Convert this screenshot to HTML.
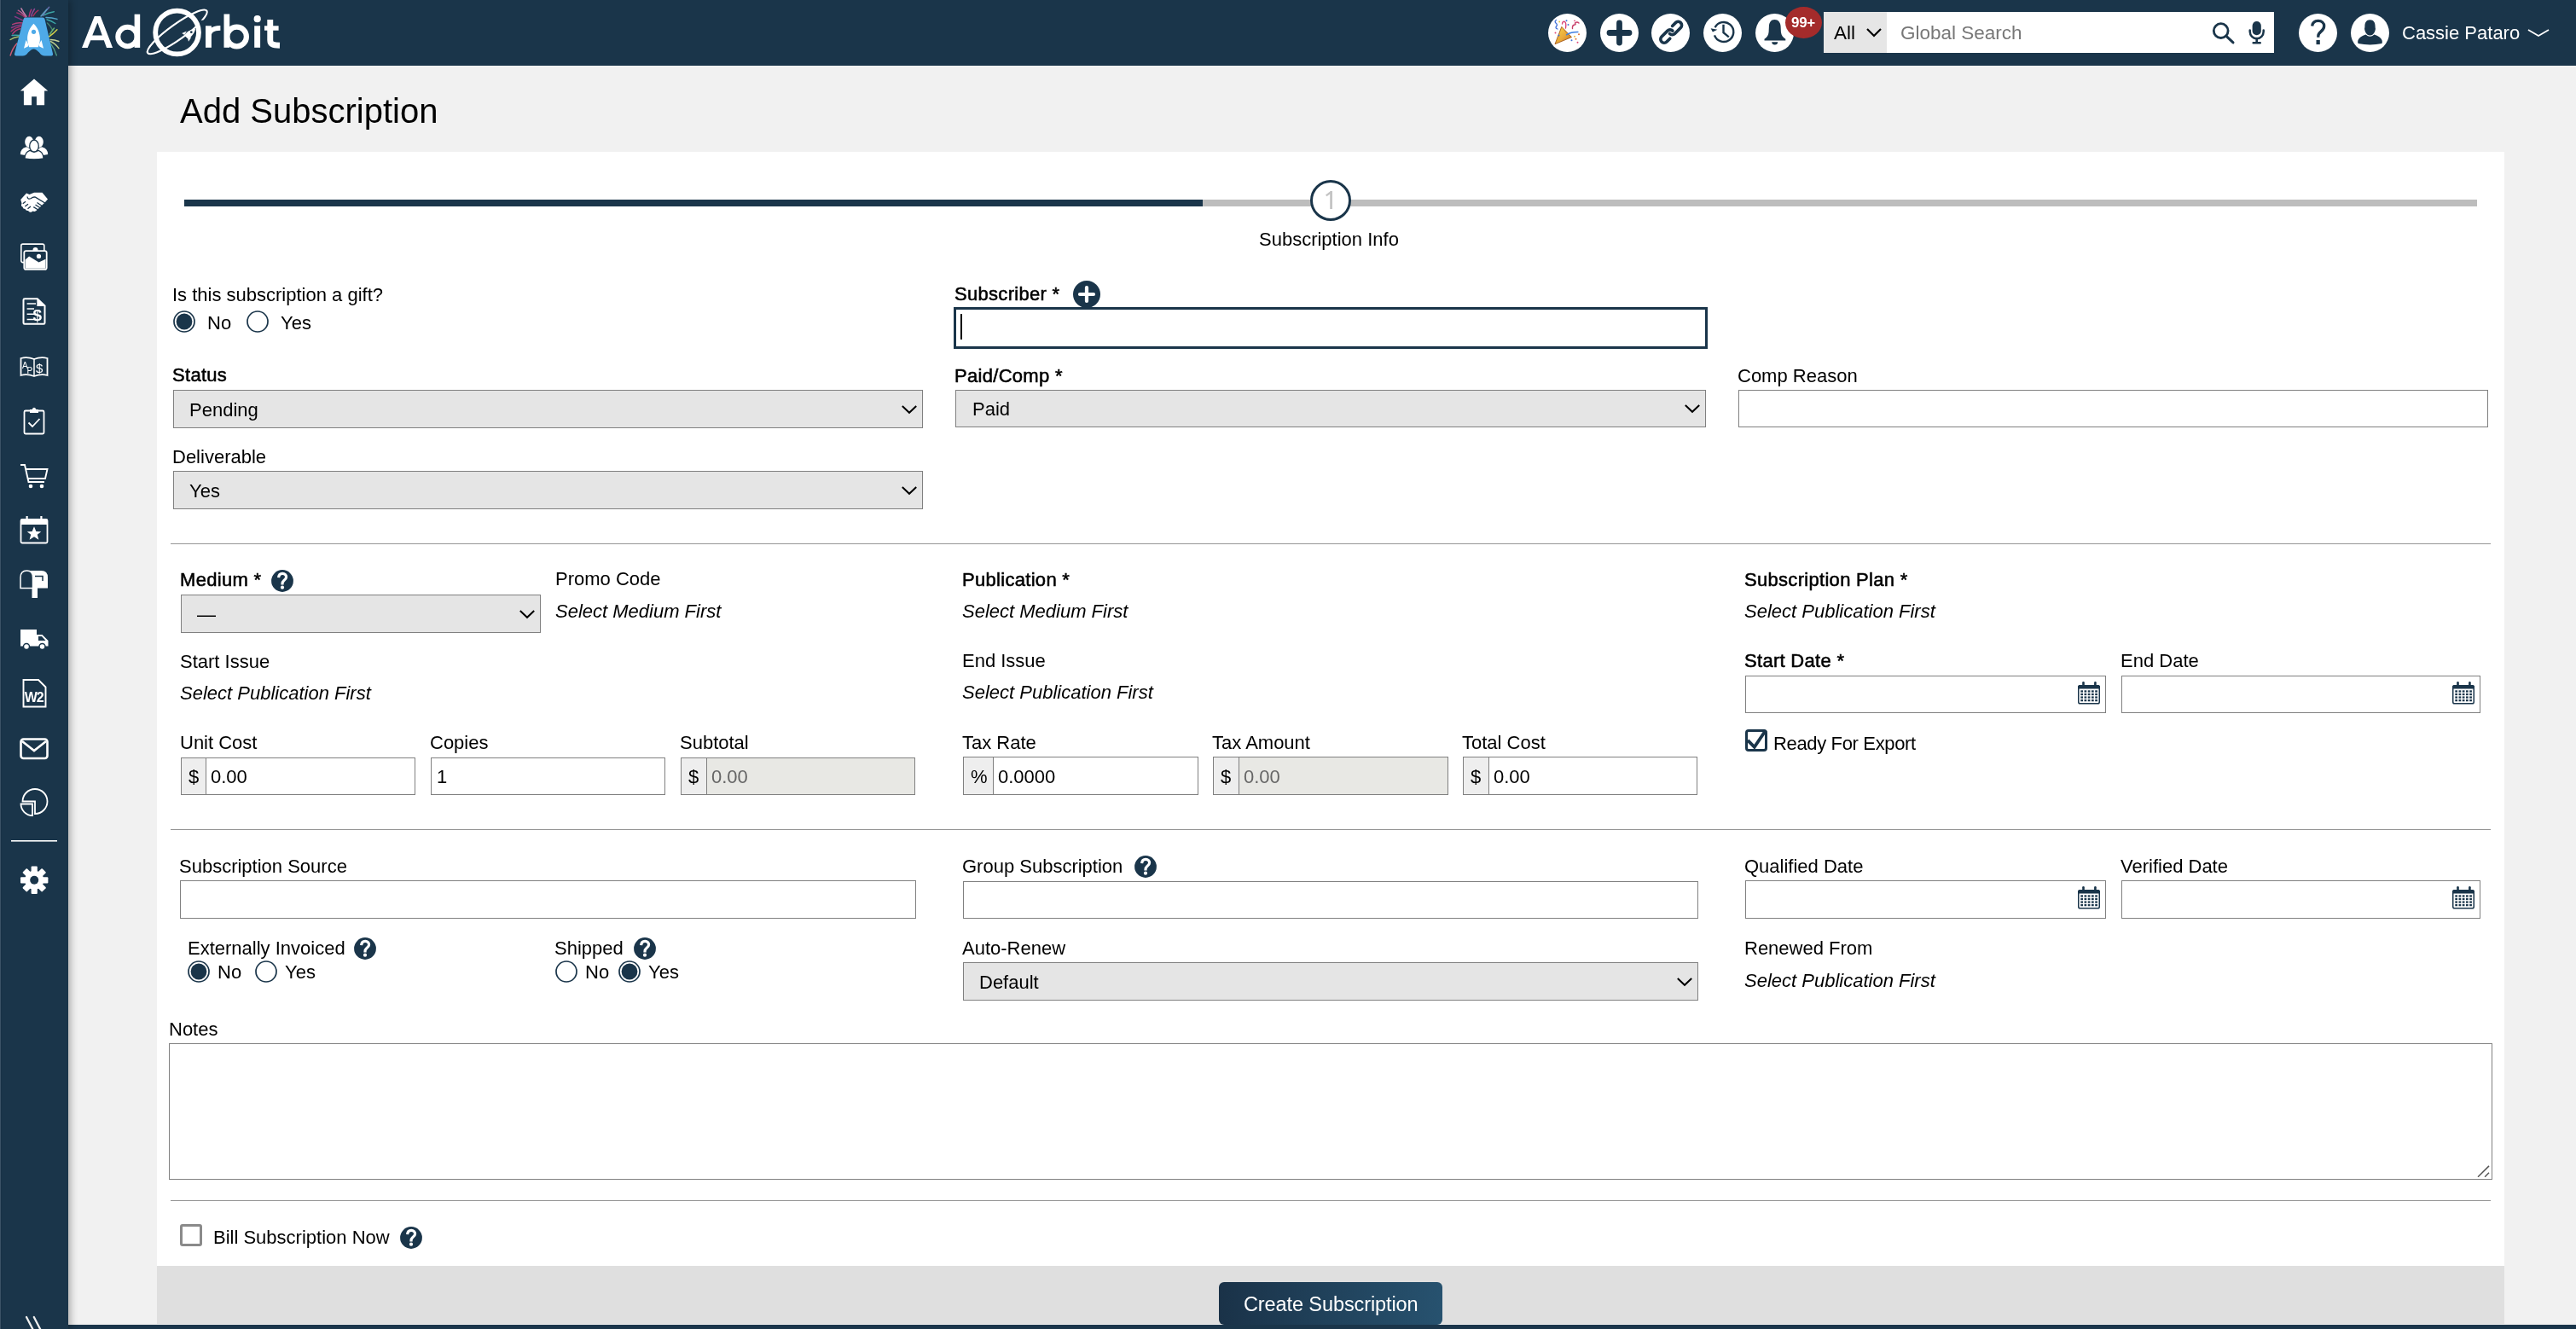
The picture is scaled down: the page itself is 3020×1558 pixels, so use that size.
<!DOCTYPE html><html><head><meta charset="utf-8"><style>
html,body{margin:0;padding:0}
body{width:3020px;height:1558px;position:relative;overflow:hidden;background:#f1f1f1;font-family:"Liberation Sans",sans-serif}
.a{position:absolute}
svg.a{will-change:transform}
.t{position:absolute;white-space:nowrap;line-height:1;will-change:transform}
.hc{border-radius:50%;background:#1a354a;color:#fff;text-align:center;font-weight:bold}
</style></head><body>
<div class="a" style="left:184px;top:178px;width:2752px;height:1374px;background:#fff"></div>
<div class="a" style="left:184px;top:1484px;width:2752px;height:68px;background:#dfdfdf"></div>
<div class="t" style="left:210.5px;top:109.64px;font-size:40px;font-weight:normal;font-style:normal;color:#000;">Add Subscription</div>
<div class="a" style="left:216px;top:234px;width:1194px;height:8px;background:#1a354a"></div>
<div class="a" style="left:1410px;top:234px;width:1494px;height:8px;background:#bdbdbd"></div>
<div class="a" style="left:1536px;top:211px;width:48px;height:48px;box-sizing:border-box;border-radius:50%;border:3px solid #1a354a;background:#fff"></div>
<svg class="a" style="left:1550px;top:220px" width="16" height="28" viewBox="0 0 16 28"><path d="M9.2 4 H12 V25 H9.2 Z M4 8.5 L10 4 L11.2 6 L5.5 10.3 Z" fill="#c4c4c4"/></svg>
<div class="t" style="left:1476px;top:270.38px;font-size:22px;font-weight:normal;font-style:normal;color:#000;">Subscription Info</div>
<div class="t" style="left:202px;top:334.88px;font-size:22px;font-weight:normal;font-style:normal;color:#000;">Is this subscription a gift?</div>
<svg class="a" style="left:201.5px;top:362.8px" width="28" height="28" viewBox="0 0 28 28"><circle cx="14" cy="14" r="12" fill="#fff" stroke="#1a354a" stroke-width="1.7"/><circle cx="14" cy="14" r="9.4" fill="#1a354a"/></svg>
<div class="t" style="left:243px;top:367.68px;font-size:22px;font-weight:normal;font-style:normal;color:#000;">No</div>
<svg class="a" style="left:288px;top:363px" width="28" height="28" viewBox="0 0 28 28"><circle cx="14" cy="14" r="12" fill="#fff" stroke="#1a354a" stroke-width="1.7"/></svg>
<div class="t" style="left:329px;top:367.68px;font-size:22px;font-weight:normal;font-style:normal;color:#000;">Yes</div>
<div class="t" style="left:1119px;top:334.08px;font-size:22px;font-weight:normal;font-style:normal;color:#000;letter-spacing:0.3px;-webkit-text-stroke:0.55px #000;">Subscriber *</div>
<svg class="a" style="left:1258px;top:329.4px" width="32" height="32" viewBox="0 0 32 32"><circle cx="16" cy="16" r="16" fill="#1a354a"/><path d="M16 8 V24 M8 16 H24" stroke="#fff" stroke-width="4.2" stroke-linecap="round"/></svg>
<div class="a" style="left:1118px;top:360px;width:884px;height:49px;background:#fff;border:3px solid #1a354a;box-sizing:border-box"></div>
<div class="a" style="left:1126px;top:368px;width:2px;height:30px;background:#000"></div>
<div class="t" style="left:202px;top:428.88px;font-size:22px;font-weight:normal;font-style:normal;color:#000;letter-spacing:0.3px;-webkit-text-stroke:0.55px #000;">Status</div>
<div class="a" style="left:203px;top:457px;width:879px;height:45px;background:#e5e5e5;border:1px solid #808080;box-sizing:border-box"></div>
<div class="t" style="left:222px;top:469.88px;font-size:22px;font-weight:normal;font-style:normal;color:#000;">Pending</div>
<svg class="a" style="left:1056px;top:472.5px" width="20" height="14" viewBox="0 0 20 14"><path d="M1.8 3 L10 10.8 L18.2 3" fill="none" stroke="#000" stroke-width="2"/></svg>
<div class="t" style="left:1119px;top:430.08px;font-size:22px;font-weight:normal;font-style:normal;color:#000;letter-spacing:0.3px;-webkit-text-stroke:0.55px #000;">Paid/Comp *</div>
<div class="a" style="left:1120px;top:457px;width:880px;height:44px;background:#e5e5e5;border:1px solid #808080;box-sizing:border-box"></div>
<div class="t" style="left:1140px;top:469.38px;font-size:22px;font-weight:normal;font-style:normal;color:#000;">Paid</div>
<svg class="a" style="left:1974px;top:472.0px" width="20" height="14" viewBox="0 0 20 14"><path d="M1.8 3 L10 10.8 L18.2 3" fill="none" stroke="#000" stroke-width="2"/></svg>
<div class="t" style="left:2037px;top:429.68px;font-size:22px;font-weight:normal;font-style:normal;color:#000;">Comp Reason</div>
<div class="a" style="left:2038px;top:457px;width:879px;height:44px;background:#fff;border:1px solid #808080;box-sizing:border-box"></div>
<div class="t" style="left:202px;top:524.98px;font-size:22px;font-weight:normal;font-style:normal;color:#000;">Deliverable</div>
<div class="a" style="left:203px;top:552px;width:879px;height:45px;background:#e5e5e5;border:1px solid #808080;box-sizing:border-box"></div>
<div class="t" style="left:222px;top:564.88px;font-size:22px;font-weight:normal;font-style:normal;color:#000;">Yes</div>
<svg class="a" style="left:1056px;top:567.5px" width="20" height="14" viewBox="0 0 20 14"><path d="M1.8 3 L10 10.8 L18.2 3" fill="none" stroke="#000" stroke-width="2"/></svg>
<div class="a" style="left:200px;top:637px;width:2720px;height:1px;background:#959595"></div>
<div class="t" style="left:211px;top:668.58px;font-size:22px;font-weight:normal;font-style:normal;color:#000;letter-spacing:0.3px;-webkit-text-stroke:0.55px #000;">Medium *</div>
<svg class="a" style="left:317.8px;top:667.5px" width="26" height="26" viewBox="0 0 26 26"><circle cx="13" cy="13" r="12.9" fill="#1a354a"/><path d="M8.6 9.2 C8.9 5.6 10.9 4.3 13.2 4.3 C16 4.3 17.6 6.3 17.6 8.4 C17.6 10.6 16 11.7 14.7 12.7 C13.5 13.7 13 14.6 13 16.4 L13 17.4" fill="none" stroke="#fff" stroke-width="3.2"/><circle cx="13" cy="20.7" r="2.1" fill="#fff"/></svg>
<div class="a" style="left:212px;top:697px;width:422px;height:45px;background:#e5e5e5;border:1px solid #808080;box-sizing:border-box"></div>
<div class="t" style="left:231px;top:709.88px;font-size:22px;font-weight:normal;font-style:normal;color:#000;">&mdash;</div>
<svg class="a" style="left:608px;top:712.5px" width="20" height="14" viewBox="0 0 20 14"><path d="M1.8 3 L10 10.8 L18.2 3" fill="none" stroke="#000" stroke-width="2"/></svg>
<div class="t" style="left:651px;top:668.38px;font-size:22px;font-weight:normal;font-style:normal;color:#000;">Promo Code</div>
<div class="t" style="left:651px;top:706.08px;font-size:22px;font-weight:normal;font-style:italic;color:#000;">Select Medium First</div>
<div class="t" style="left:211px;top:765.08px;font-size:22px;font-weight:normal;font-style:normal;color:#000;">Start Issue</div>
<div class="t" style="left:211px;top:802.08px;font-size:22px;font-weight:normal;font-style:italic;color:#000;">Select Publication First</div>
<div class="t" style="left:211px;top:859.68px;font-size:22px;font-weight:normal;font-style:normal;color:#000;">Unit Cost</div>
<div class="a" style="left:212px;top:888px;width:275px;height:44px;background:#fff;border:1px solid #808080;box-sizing:border-box"></div>
<div class="a" style="left:212px;top:888px;width:30px;height:44px;background:#eeeeee;border:1px solid #808080;box-sizing:border-box"></div>
<div class="t" style="left:221px;top:900.38px;font-size:22px;font-weight:normal;font-style:normal;color:#000;">$</div>
<div class="t" style="left:247px;top:900.38px;font-size:22px;font-weight:normal;font-style:normal;color:#000;">0.00</div>
<div class="t" style="left:504px;top:859.68px;font-size:22px;font-weight:normal;font-style:normal;color:#000;">Copies</div>
<div class="a" style="left:505px;top:888px;width:275px;height:44px;background:#fff;border:1px solid #808080;box-sizing:border-box"></div>
<div class="t" style="left:512px;top:900.38px;font-size:22px;font-weight:normal;font-style:normal;color:#000;">1</div>
<div class="t" style="left:797px;top:859.68px;font-size:22px;font-weight:normal;font-style:normal;color:#000;">Subtotal</div>
<div class="a" style="left:798px;top:888px;width:275px;height:44px;background:#e8e8e4;border:1px solid #808080;box-sizing:border-box"></div>
<div class="a" style="left:798px;top:888px;width:31px;height:44px;background:#eeeeee;border:1px solid #808080;box-sizing:border-box"></div>
<div class="t" style="left:807px;top:900.38px;font-size:22px;font-weight:normal;font-style:normal;color:#000;">$</div>
<div class="t" style="left:834px;top:900.38px;font-size:22px;font-weight:normal;font-style:normal;color:#666;">0.00</div>
<div class="t" style="left:1128px;top:669.08px;font-size:22px;font-weight:normal;font-style:normal;color:#000;letter-spacing:0.3px;-webkit-text-stroke:0.55px #000;">Publication *</div>
<div class="t" style="left:1128px;top:706.18px;font-size:22px;font-weight:normal;font-style:italic;color:#000;">Select Medium First</div>
<div class="t" style="left:1128px;top:763.78px;font-size:22px;font-weight:normal;font-style:normal;color:#000;">End Issue</div>
<div class="t" style="left:1128px;top:801.38px;font-size:22px;font-weight:normal;font-style:italic;color:#000;">Select Publication First</div>
<div class="t" style="left:1128px;top:859.78px;font-size:22px;font-weight:normal;font-style:normal;color:#000;">Tax Rate</div>
<div class="a" style="left:1129px;top:887px;width:276px;height:45px;background:#fff;border:1px solid #808080;box-sizing:border-box"></div>
<div class="a" style="left:1129px;top:887px;width:36px;height:45px;background:#eeeeee;border:1px solid #808080;box-sizing:border-box"></div>
<div class="t" style="left:1138px;top:899.88px;font-size:22px;font-weight:normal;font-style:normal;color:#000;">%</div>
<div class="t" style="left:1170px;top:899.88px;font-size:22px;font-weight:normal;font-style:normal;color:#000;">0.0000</div>
<div class="t" style="left:1421px;top:859.78px;font-size:22px;font-weight:normal;font-style:normal;color:#000;">Tax Amount</div>
<div class="a" style="left:1422px;top:887px;width:276px;height:45px;background:#e8e8e4;border:1px solid #808080;box-sizing:border-box"></div>
<div class="a" style="left:1422px;top:887px;width:31px;height:45px;background:#eeeeee;border:1px solid #808080;box-sizing:border-box"></div>
<div class="t" style="left:1431px;top:899.88px;font-size:22px;font-weight:normal;font-style:normal;color:#000;">$</div>
<div class="t" style="left:1458px;top:899.88px;font-size:22px;font-weight:normal;font-style:normal;color:#666;">0.00</div>
<div class="t" style="left:1714px;top:859.78px;font-size:22px;font-weight:normal;font-style:normal;color:#000;">Total Cost</div>
<div class="a" style="left:1715px;top:887px;width:275px;height:45px;background:#fff;border:1px solid #808080;box-sizing:border-box"></div>
<div class="a" style="left:1715px;top:887px;width:31px;height:45px;background:#eeeeee;border:1px solid #808080;box-sizing:border-box"></div>
<div class="t" style="left:1724px;top:899.88px;font-size:22px;font-weight:normal;font-style:normal;color:#000;">$</div>
<div class="t" style="left:1751px;top:899.88px;font-size:22px;font-weight:normal;font-style:normal;color:#000;">0.00</div>
<div class="t" style="left:2045px;top:668.78px;font-size:22px;font-weight:normal;font-style:normal;color:#000;letter-spacing:0.3px;-webkit-text-stroke:0.55px #000;">Subscription Plan *</div>
<div class="t" style="left:2045px;top:706.38px;font-size:22px;font-weight:normal;font-style:italic;color:#000;">Select Publication First</div>
<div class="t" style="left:2045px;top:763.68px;font-size:22px;font-weight:normal;font-style:normal;color:#000;letter-spacing:0.3px;-webkit-text-stroke:0.55px #000;">Start Date *</div>
<div class="a" style="left:2046px;top:792px;width:423px;height:44px;background:#fff;border:1px solid #808080;box-sizing:border-box"></div>
<svg class="a" style="left:2436px;top:799px" width="26" height="27" viewBox="0 0 26 27"><rect x="0.75" y="4.75" width="24.5" height="21" rx="1.8" fill="#fff" stroke="#1a354a" stroke-width="1.5"/><path d="M0 6.5 Q0 4 2.5 4 H23.5 Q26 4 26 6.5 V8.6 H0 Z" fill="#1a354a"/><rect x="5.2" y="0" width="2.6" height="6" rx="1.3" fill="#1a354a"/><rect x="19.1" y="0" width="2.6" height="6" rx="1.3" fill="#1a354a"/><rect x="3.30" y="10.30" width="2.7" height="2.3" fill="#1a354a"/><rect x="7.53" y="10.30" width="2.7" height="2.3" fill="#1a354a"/><rect x="11.76" y="10.30" width="2.7" height="2.3" fill="#1a354a"/><rect x="15.99" y="10.30" width="2.7" height="2.3" fill="#1a354a"/><rect x="20.22" y="10.30" width="2.7" height="2.3" fill="#1a354a"/><rect x="3.30" y="13.85" width="2.7" height="2.3" fill="#1a354a"/><rect x="7.53" y="13.85" width="2.7" height="2.3" fill="#1a354a"/><rect x="11.76" y="13.85" width="2.7" height="2.3" fill="#1a354a"/><rect x="15.99" y="13.85" width="2.7" height="2.3" fill="#1a354a"/><rect x="20.22" y="13.85" width="2.7" height="2.3" fill="#1a354a"/><rect x="3.30" y="17.40" width="2.7" height="2.3" fill="#1a354a"/><rect x="7.53" y="17.40" width="2.7" height="2.3" fill="#1a354a"/><rect x="11.76" y="17.40" width="2.7" height="2.3" fill="#1a354a"/><rect x="15.99" y="17.40" width="2.7" height="2.3" fill="#1a354a"/><rect x="20.22" y="17.40" width="2.7" height="2.3" fill="#1a354a"/><rect x="3.30" y="20.95" width="2.7" height="2.3" fill="#1a354a"/><rect x="7.53" y="20.95" width="2.7" height="2.3" fill="#1a354a"/><rect x="11.76" y="20.95" width="2.7" height="2.3" fill="#1a354a"/><rect x="15.99" y="20.95" width="2.7" height="2.3" fill="#1a354a"/><rect x="20.22" y="20.95" width="2.7" height="2.3" fill="#1a354a"/></svg>
<div class="t" style="left:2486px;top:763.68px;font-size:22px;font-weight:normal;font-style:normal;color:#000;">End Date</div>
<div class="a" style="left:2487px;top:792px;width:421px;height:44px;background:#fff;border:1px solid #808080;box-sizing:border-box"></div>
<svg class="a" style="left:2875px;top:799px" width="26" height="27" viewBox="0 0 26 27"><rect x="0.75" y="4.75" width="24.5" height="21" rx="1.8" fill="#fff" stroke="#1a354a" stroke-width="1.5"/><path d="M0 6.5 Q0 4 2.5 4 H23.5 Q26 4 26 6.5 V8.6 H0 Z" fill="#1a354a"/><rect x="5.2" y="0" width="2.6" height="6" rx="1.3" fill="#1a354a"/><rect x="19.1" y="0" width="2.6" height="6" rx="1.3" fill="#1a354a"/><rect x="3.30" y="10.30" width="2.7" height="2.3" fill="#1a354a"/><rect x="7.53" y="10.30" width="2.7" height="2.3" fill="#1a354a"/><rect x="11.76" y="10.30" width="2.7" height="2.3" fill="#1a354a"/><rect x="15.99" y="10.30" width="2.7" height="2.3" fill="#1a354a"/><rect x="20.22" y="10.30" width="2.7" height="2.3" fill="#1a354a"/><rect x="3.30" y="13.85" width="2.7" height="2.3" fill="#1a354a"/><rect x="7.53" y="13.85" width="2.7" height="2.3" fill="#1a354a"/><rect x="11.76" y="13.85" width="2.7" height="2.3" fill="#1a354a"/><rect x="15.99" y="13.85" width="2.7" height="2.3" fill="#1a354a"/><rect x="20.22" y="13.85" width="2.7" height="2.3" fill="#1a354a"/><rect x="3.30" y="17.40" width="2.7" height="2.3" fill="#1a354a"/><rect x="7.53" y="17.40" width="2.7" height="2.3" fill="#1a354a"/><rect x="11.76" y="17.40" width="2.7" height="2.3" fill="#1a354a"/><rect x="15.99" y="17.40" width="2.7" height="2.3" fill="#1a354a"/><rect x="20.22" y="17.40" width="2.7" height="2.3" fill="#1a354a"/><rect x="3.30" y="20.95" width="2.7" height="2.3" fill="#1a354a"/><rect x="7.53" y="20.95" width="2.7" height="2.3" fill="#1a354a"/><rect x="11.76" y="20.95" width="2.7" height="2.3" fill="#1a354a"/><rect x="15.99" y="20.95" width="2.7" height="2.3" fill="#1a354a"/><rect x="20.22" y="20.95" width="2.7" height="2.3" fill="#1a354a"/></svg>
<svg class="a" style="left:2045px;top:853px" width="30" height="30" viewBox="0 0 30 30"><rect x="2.5" y="3.5" width="23" height="23" rx="2.5" fill="#fff" stroke="#1a354a" stroke-width="3"/><path d="M4 14.8 L11.8 22.8 L25 3.2" fill="none" stroke="#1a354a" stroke-width="3.8"/></svg>
<div class="t" style="left:2079px;top:861.38px;font-size:22px;font-weight:normal;font-style:normal;color:#000;letter-spacing:-0.35px;">Ready For Export</div>
<div class="a" style="left:200px;top:972px;width:2720px;height:1px;background:#959595"></div>
<div class="t" style="left:210px;top:1004.88px;font-size:22px;font-weight:normal;font-style:normal;color:#000;">Subscription Source</div>
<div class="a" style="left:211px;top:1032px;width:863px;height:45px;background:#fff;border:1px solid #808080;box-sizing:border-box"></div>
<div class="t" style="left:1128px;top:1004.98px;font-size:22px;font-weight:normal;font-style:normal;color:#000;">Group Subscription</div>
<svg class="a" style="left:1329.8px;top:1002.7px" width="26" height="26" viewBox="0 0 26 26"><circle cx="13" cy="13" r="12.9" fill="#1a354a"/><path d="M8.6 9.2 C8.9 5.6 10.9 4.3 13.2 4.3 C16 4.3 17.6 6.3 17.6 8.4 C17.6 10.6 16 11.7 14.7 12.7 C13.5 13.7 13 14.6 13 16.4 L13 17.4" fill="none" stroke="#fff" stroke-width="3.2"/><circle cx="13" cy="20.7" r="2.1" fill="#fff"/></svg>
<div class="a" style="left:1129px;top:1033px;width:862px;height:44px;background:#fff;border:1px solid #808080;box-sizing:border-box"></div>
<div class="t" style="left:2045px;top:1005.38px;font-size:22px;font-weight:normal;font-style:normal;color:#000;">Qualified Date</div>
<div class="a" style="left:2046px;top:1032px;width:423px;height:45px;background:#fff;border:1px solid #808080;box-sizing:border-box"></div>
<svg class="a" style="left:2436px;top:1039px" width="26" height="27" viewBox="0 0 26 27"><rect x="0.75" y="4.75" width="24.5" height="21" rx="1.8" fill="#fff" stroke="#1a354a" stroke-width="1.5"/><path d="M0 6.5 Q0 4 2.5 4 H23.5 Q26 4 26 6.5 V8.6 H0 Z" fill="#1a354a"/><rect x="5.2" y="0" width="2.6" height="6" rx="1.3" fill="#1a354a"/><rect x="19.1" y="0" width="2.6" height="6" rx="1.3" fill="#1a354a"/><rect x="3.30" y="10.30" width="2.7" height="2.3" fill="#1a354a"/><rect x="7.53" y="10.30" width="2.7" height="2.3" fill="#1a354a"/><rect x="11.76" y="10.30" width="2.7" height="2.3" fill="#1a354a"/><rect x="15.99" y="10.30" width="2.7" height="2.3" fill="#1a354a"/><rect x="20.22" y="10.30" width="2.7" height="2.3" fill="#1a354a"/><rect x="3.30" y="13.85" width="2.7" height="2.3" fill="#1a354a"/><rect x="7.53" y="13.85" width="2.7" height="2.3" fill="#1a354a"/><rect x="11.76" y="13.85" width="2.7" height="2.3" fill="#1a354a"/><rect x="15.99" y="13.85" width="2.7" height="2.3" fill="#1a354a"/><rect x="20.22" y="13.85" width="2.7" height="2.3" fill="#1a354a"/><rect x="3.30" y="17.40" width="2.7" height="2.3" fill="#1a354a"/><rect x="7.53" y="17.40" width="2.7" height="2.3" fill="#1a354a"/><rect x="11.76" y="17.40" width="2.7" height="2.3" fill="#1a354a"/><rect x="15.99" y="17.40" width="2.7" height="2.3" fill="#1a354a"/><rect x="20.22" y="17.40" width="2.7" height="2.3" fill="#1a354a"/><rect x="3.30" y="20.95" width="2.7" height="2.3" fill="#1a354a"/><rect x="7.53" y="20.95" width="2.7" height="2.3" fill="#1a354a"/><rect x="11.76" y="20.95" width="2.7" height="2.3" fill="#1a354a"/><rect x="15.99" y="20.95" width="2.7" height="2.3" fill="#1a354a"/><rect x="20.22" y="20.95" width="2.7" height="2.3" fill="#1a354a"/></svg>
<div class="t" style="left:2486px;top:1005.38px;font-size:22px;font-weight:normal;font-style:normal;color:#000;">Verified Date</div>
<div class="a" style="left:2487px;top:1032px;width:421px;height:45px;background:#fff;border:1px solid #808080;box-sizing:border-box"></div>
<svg class="a" style="left:2875px;top:1039px" width="26" height="27" viewBox="0 0 26 27"><rect x="0.75" y="4.75" width="24.5" height="21" rx="1.8" fill="#fff" stroke="#1a354a" stroke-width="1.5"/><path d="M0 6.5 Q0 4 2.5 4 H23.5 Q26 4 26 6.5 V8.6 H0 Z" fill="#1a354a"/><rect x="5.2" y="0" width="2.6" height="6" rx="1.3" fill="#1a354a"/><rect x="19.1" y="0" width="2.6" height="6" rx="1.3" fill="#1a354a"/><rect x="3.30" y="10.30" width="2.7" height="2.3" fill="#1a354a"/><rect x="7.53" y="10.30" width="2.7" height="2.3" fill="#1a354a"/><rect x="11.76" y="10.30" width="2.7" height="2.3" fill="#1a354a"/><rect x="15.99" y="10.30" width="2.7" height="2.3" fill="#1a354a"/><rect x="20.22" y="10.30" width="2.7" height="2.3" fill="#1a354a"/><rect x="3.30" y="13.85" width="2.7" height="2.3" fill="#1a354a"/><rect x="7.53" y="13.85" width="2.7" height="2.3" fill="#1a354a"/><rect x="11.76" y="13.85" width="2.7" height="2.3" fill="#1a354a"/><rect x="15.99" y="13.85" width="2.7" height="2.3" fill="#1a354a"/><rect x="20.22" y="13.85" width="2.7" height="2.3" fill="#1a354a"/><rect x="3.30" y="17.40" width="2.7" height="2.3" fill="#1a354a"/><rect x="7.53" y="17.40" width="2.7" height="2.3" fill="#1a354a"/><rect x="11.76" y="17.40" width="2.7" height="2.3" fill="#1a354a"/><rect x="15.99" y="17.40" width="2.7" height="2.3" fill="#1a354a"/><rect x="20.22" y="17.40" width="2.7" height="2.3" fill="#1a354a"/><rect x="3.30" y="20.95" width="2.7" height="2.3" fill="#1a354a"/><rect x="7.53" y="20.95" width="2.7" height="2.3" fill="#1a354a"/><rect x="11.76" y="20.95" width="2.7" height="2.3" fill="#1a354a"/><rect x="15.99" y="20.95" width="2.7" height="2.3" fill="#1a354a"/><rect x="20.22" y="20.95" width="2.7" height="2.3" fill="#1a354a"/></svg>
<div class="t" style="left:220px;top:1100.88px;font-size:22px;font-weight:normal;font-style:normal;color:#000;">Externally Invoiced</div>
<svg class="a" style="left:415.0px;top:1098.8px" width="26" height="26" viewBox="0 0 26 26"><circle cx="13" cy="13" r="12.9" fill="#1a354a"/><path d="M8.6 9.2 C8.9 5.6 10.9 4.3 13.2 4.3 C16 4.3 17.6 6.3 17.6 8.4 C17.6 10.6 16 11.7 14.7 12.7 C13.5 13.7 13 14.6 13 16.4 L13 17.4" fill="none" stroke="#fff" stroke-width="3.2"/><circle cx="13" cy="20.7" r="2.1" fill="#fff"/></svg>
<svg class="a" style="left:218.7px;top:1125px" width="28" height="28" viewBox="0 0 28 28"><circle cx="14" cy="14" r="12" fill="#fff" stroke="#1a354a" stroke-width="1.7"/><circle cx="14" cy="14" r="9.4" fill="#1a354a"/></svg>
<div class="t" style="left:255px;top:1129.38px;font-size:22px;font-weight:normal;font-style:normal;color:#000;">No</div>
<svg class="a" style="left:298.3px;top:1125px" width="28" height="28" viewBox="0 0 28 28"><circle cx="14" cy="14" r="12" fill="#fff" stroke="#1a354a" stroke-width="1.7"/></svg>
<div class="t" style="left:334px;top:1129.38px;font-size:22px;font-weight:normal;font-style:normal;color:#000;">Yes</div>
<div class="t" style="left:650px;top:1100.88px;font-size:22px;font-weight:normal;font-style:normal;color:#000;">Shipped</div>
<svg class="a" style="left:743.4px;top:1098.8px" width="26" height="26" viewBox="0 0 26 26"><circle cx="13" cy="13" r="12.9" fill="#1a354a"/><path d="M8.6 9.2 C8.9 5.6 10.9 4.3 13.2 4.3 C16 4.3 17.6 6.3 17.6 8.4 C17.6 10.6 16 11.7 14.7 12.7 C13.5 13.7 13 14.6 13 16.4 L13 17.4" fill="none" stroke="#fff" stroke-width="3.2"/><circle cx="13" cy="20.7" r="2.1" fill="#fff"/></svg>
<svg class="a" style="left:649.7px;top:1125px" width="28" height="28" viewBox="0 0 28 28"><circle cx="14" cy="14" r="12" fill="#fff" stroke="#1a354a" stroke-width="1.7"/></svg>
<div class="t" style="left:686px;top:1129.38px;font-size:22px;font-weight:normal;font-style:normal;color:#000;">No</div>
<svg class="a" style="left:723.8px;top:1125px" width="28" height="28" viewBox="0 0 28 28"><circle cx="14" cy="14" r="12" fill="#fff" stroke="#1a354a" stroke-width="1.7"/><circle cx="14" cy="14" r="9.4" fill="#1a354a"/></svg>
<div class="t" style="left:760px;top:1129.38px;font-size:22px;font-weight:normal;font-style:normal;color:#000;">Yes</div>
<div class="t" style="left:1128px;top:1100.98px;font-size:22px;font-weight:normal;font-style:normal;color:#000;">Auto-Renew</div>
<div class="a" style="left:1129px;top:1128px;width:862px;height:45px;background:#e5e5e5;border:1px solid #808080;box-sizing:border-box"></div>
<div class="t" style="left:1148px;top:1140.88px;font-size:22px;font-weight:normal;font-style:normal;color:#000;">Default</div>
<svg class="a" style="left:1965px;top:1143.5px" width="20" height="14" viewBox="0 0 20 14"><path d="M1.8 3 L10 10.8 L18.2 3" fill="none" stroke="#000" stroke-width="2"/></svg>
<div class="t" style="left:2045px;top:1100.98px;font-size:22px;font-weight:normal;font-style:normal;color:#000;">Renewed From</div>
<div class="t" style="left:2045px;top:1138.58px;font-size:22px;font-weight:normal;font-style:italic;color:#000;">Select Publication First</div>
<div class="t" style="left:198px;top:1195.78px;font-size:22px;font-weight:normal;font-style:normal;color:#000;">Notes</div>
<div class="a" style="left:198px;top:1223px;width:2724px;height:160px;background:#fff;border:1px solid #808080;box-sizing:border-box"></div>
<svg class="a" style="left:2904px;top:1364px" width="16" height="16" viewBox="0 0 16 16"><path d="M1 15.7 L14 2.9 M9.1 15.7 L14 10.8" stroke="#555" stroke-width="1.5"/></svg>
<div class="a" style="left:200px;top:1407px;width:2720px;height:1px;background:#959595"></div>
<div class="a" style="left:211px;top:1435px;width:26px;height:26px;border:3px solid #8a8a8a;border-radius:3px;box-sizing:border-box;background:#fff"></div>
<div class="t" style="left:250px;top:1439.88px;font-size:22px;font-weight:normal;font-style:normal;color:#000;">Bill Subscription Now</div>
<svg class="a" style="left:468.5px;top:1437.6px" width="26" height="26" viewBox="0 0 26 26"><circle cx="13" cy="13" r="12.9" fill="#1a354a"/><path d="M8.6 9.2 C8.9 5.6 10.9 4.3 13.2 4.3 C16 4.3 17.6 6.3 17.6 8.4 C17.6 10.6 16 11.7 14.7 12.7 C13.5 13.7 13 14.6 13 16.4 L13 17.4" fill="none" stroke="#fff" stroke-width="3.2"/><circle cx="13" cy="20.7" r="2.1" fill="#fff"/></svg>
<div class="a" style="left:1429px;top:1503px;width:262px;height:49.5px;border-radius:6px;background:linear-gradient(90deg,#1a3248,#27526f)"></div>
<div class="t" style="left:1457.5px;top:1517.61px;font-size:23.5px;font-weight:normal;font-style:normal;color:#fff;letter-spacing:-0.1px;">Create Subscription</div>
<div class="a" style="left:0px;top:1553px;width:3020px;height:5px;background:#1a354a"></div>
<div class="a" style="left:0px;top:0px;width:3020px;height:77px;background:#1a354a"></div>
<div class="a" style="left:0;top:0;width:80px;height:1558px;background:#1a354a;box-shadow:3px 0 8px rgba(0,0,0,0.28)"></div>
<div class="a" style="left:1815.0px;top:15.8px;width:45px;height:45px;border-radius:50%;background:#fff"></div>
<div class="a" style="left:1875.5px;top:15.8px;width:45px;height:45px;border-radius:50%;background:#fff"></div>
<div class="a" style="left:1935.9px;top:15.8px;width:45px;height:45px;border-radius:50%;background:#fff"></div>
<div class="a" style="left:1997.0px;top:15.8px;width:45px;height:45px;border-radius:50%;background:#fff"></div>
<div class="a" style="left:2057.5px;top:15.8px;width:45px;height:45px;border-radius:50%;background:#fff"></div>
<div class="a" style="left:2695.0px;top:15.8px;width:45px;height:45px;border-radius:50%;background:#fff"></div>
<div class="a" style="left:2755.5px;top:15.8px;width:45px;height:45px;border-radius:50%;background:#fff"></div>
<div class="a" style="left:0px;top:0px;width:1px;height:1558px;background:#3b5266"></div>
<div class="a" style="left:1px;top:0px;width:1px;height:1558px;background:#183247"></div>
<svg class="a" style="left:0px;top:0px;overflow:visible" width="80" height="1558" viewBox="0 0 80 1558">
<path fill="#fff" d="M40 92.6 L56.2 106.5 L52.1 106.5 L52.1 123.3 L42.9 123.3 L42.9 113.2 L37.1 113.2 L37.1 123.3 L27.9 123.3 L27.9 106.5 L23.8 106.5 Z"/>
<g fill="#fff">
<ellipse cx="34.2" cy="166.3" rx="5" ry="6.6"/><ellipse cx="45.8" cy="166.3" rx="5" ry="6.6"/>
<path d="M23.8 181 Q24 174 31 172.3 L36.5 175 L36.5 181.8 Q29 182.2 23.8 181 Z"/><path d="M56.2 181 Q56 174 49 172.3 L43.5 175 L43.5 181.8 Q51 182.2 56.2 181 Z"/>
</g>
<g fill="#fff" stroke="#1a354a" stroke-width="1.3">
<ellipse cx="40" cy="171.2" rx="5.3" ry="7"/>
<path d="M29 185.8 Q29.2 178.2 35 176.3 Q40 180.3 45 176.3 Q50.8 178.2 51 185.8 Q40 187.8 29 185.8 Z"/>
</g>
<path fill="#fff" d="M24.2 234 L31 226.5 L34.5 228 L40 225.8 L49.5 225.8 L56 233.5 L53 237 L44 245.5 Q41.5 249 38.5 247.5 L37 248.5 Q34.5 249.5 33 247 Q30.5 247.5 29.5 245 Q27 245 26.5 242.5 Q24 241.5 25.5 238.5 Z"/>
<path d="M32 230.5 Q32.5 234.5 36.5 232.5 Q39 230.5 41.5 231.2 L53.5 238.5 M26.8 238.8 L30 236.2 M29.3 242 L33 239.2 M32.5 244.8 L36 242 M43.5 237.5 L50 242 M41.5 240 L47.5 244 M39.3 242.6 L44.8 246" fill="none" stroke="#1a354a" stroke-width="1.3"/>
<rect x="24.8" y="286.1" width="27" height="21.5" rx="2" fill="none" stroke="#fff" stroke-width="1.6"/>
<circle cx="41.5" cy="293" r="3" fill="#fff"/>
<rect x="28.3" y="294.2" width="26.4" height="21.7" rx="2.2" fill="#1a354a" stroke="#fff" stroke-width="1.8"/>
<path fill="#fff" d="M29.6 304.6 L34.1 300.4 L45.5 307.6 L53.5 303.8 L53.5 314.8 L29.6 314.8 Z"/>
<circle cx="45.5" cy="300.4" r="2.6" fill="#fff"/>
<path d="M29 350.3 H43.8 L52.5 358.5 V378.5 Q52.5 379.8 51.2 379.8 H28.8 Q27.5 379.8 27.5 378.5 V351.6 Q27.5 350.3 29 350.3 Z" fill="none" stroke="#fff" stroke-width="2"/>
<path d="M43.3 349.5 L53.3 358.9 L43.3 358.9 Z" fill="#fff"/>
<path d="M31.6 356 H42 M31.6 362 H40 M31.6 368.2 H40 M31.6 374.5 H41" stroke="#fff" stroke-width="1.6"/>
<text x="38.6" y="375.5" font-family="Liberation Sans" font-size="19" font-weight="bold" fill="#fff">$</text>
<path d="M24.5 420 Q32 418 40 421 Q48 418 55.5 420 V440 Q48 438 40 441 Q32 438 24.5 440 Z" fill="none" stroke="#fff" stroke-width="1.8"/>
<path d="M40 421 V441" stroke="#fff" stroke-width="1.5"/>
<text x="26" y="432" font-family="Liberation Sans" font-size="10" fill="#fff">A</text><text x="31.5" y="438" font-family="Liberation Sans" font-size="10" fill="#fff">P</text>
<text x="42" y="437" font-family="Liberation Sans" font-size="15" fill="#fff">$</text>
<rect x="28.5" y="481.5" width="23" height="27" rx="1.5" fill="none" stroke="#fff" stroke-width="1.8"/>
<path d="M35 484 V480 H37.5 Q40 475.5 42.5 480 H45 V484 Z" fill="#fff"/>
<path d="M33.5 495.5 L38 500 L46.5 491" fill="none" stroke="#fff" stroke-width="1.8"/>
<path d="M24 545 H29 L33.5 565 H52" fill="none" stroke="#fff" stroke-width="1.9"/>
<path d="M30 550 H55.5 L53 561 H32.5" fill="none" stroke="#fff" stroke-width="1.9"/>
<circle cx="36" cy="570" r="2.3" fill="#fff"/><circle cx="49" cy="570" r="2.3" fill="#fff"/>
<rect x="24.5" y="609" width="31" height="27.5" rx="1.5" fill="none" stroke="#fff" stroke-width="1.8"/>
<rect x="24.5" y="609" width="31" height="6" fill="#fff"/>
<rect x="30.5" y="605" width="2.2" height="6" fill="#fff"/><rect x="47.3" y="605" width="2.2" height="6" fill="#fff"/>
<path fill="#fff" transform="translate(40 625.2) scale(1.18) translate(-40 -625.2)" d="M40 618.5 L42 623.3 L47 623.5 L43.2 626.6 L44.6 631.5 L40 628.7 L35.4 631.5 L36.8 626.6 L33 623.5 L38 623.3 Z"/>
<path d="M31.5 669 Q24 669 24 677 V689.5 H38.5 V677 Q38.5 669 31.5 669 Z" fill="none" stroke="#fff" stroke-width="1.5"/>
<path fill="#fff" d="M31.5 669 H48.5 Q56 669 56 677 V689.5 H44 V701 H37.5 V689.5 H38.5 V677 Q38.5 669 31.5 669 Z"/>
<path d="M41 675.5 H50 V681" fill="none" stroke="#1a354a" stroke-width="1.5"/>
<path fill="#fff" d="M24 738 H43 V744 H49.5 L56.5 751 V757.5 H24 Z"/>
<path d="M45 746 H49 L53.5 751 H45 Z" fill="#1a354a"/>
<circle cx="31" cy="758" r="3.5" fill="#fff" stroke="#1a354a" stroke-width="1.5"/><circle cx="49.5" cy="758" r="3.5" fill="#fff" stroke="#1a354a" stroke-width="1.5"/>
<path d="M27.5 797 H45 L53.5 805.5 V828.5 H27.5 Z" fill="none" stroke="#fff" stroke-width="1.9"/>
<text x="28.8" y="822.5" font-family="Liberation Sans" font-size="16" font-weight="bold" fill="#fff" letter-spacing="-1.2">W2</text>
<rect x="24.5" y="866.5" width="31" height="22.5" rx="3" fill="none" stroke="#fff" stroke-width="2.6"/>
<path d="M26 869 L40 880 L54 869" fill="none" stroke="#fff" stroke-width="2.6"/>
<path d="M41 939.5 H26.5 A14.5 14.5 0 1 1 41 954 Z" fill="none" stroke="#fff" stroke-width="1.8"/>
<path d="M38 942.5 V956 A13.5 13.5 0 0 1 24.5 942.5 Z" fill="none" stroke="#fff" stroke-width="1.8"/>
<rect x="13" y="985" width="54" height="1.6" fill="#fff"/>
</svg>
<svg class="a" style="left:0px;top:0px;overflow:visible" width="80" height="1558" viewBox="0 0 80 1558"><rect x="36.6" y="1015.5999999999999" width="7.2" height="8" rx="1" transform="rotate(0 40.2 1031.8)" fill="#fff"/><rect x="36.6" y="1015.5999999999999" width="7.2" height="8" rx="1" transform="rotate(45 40.2 1031.8)" fill="#fff"/><rect x="36.6" y="1015.5999999999999" width="7.2" height="8" rx="1" transform="rotate(90 40.2 1031.8)" fill="#fff"/><rect x="36.6" y="1015.5999999999999" width="7.2" height="8" rx="1" transform="rotate(135 40.2 1031.8)" fill="#fff"/><rect x="36.6" y="1015.5999999999999" width="7.2" height="8" rx="1" transform="rotate(180 40.2 1031.8)" fill="#fff"/><rect x="36.6" y="1015.5999999999999" width="7.2" height="8" rx="1" transform="rotate(225 40.2 1031.8)" fill="#fff"/><rect x="36.6" y="1015.5999999999999" width="7.2" height="8" rx="1" transform="rotate(270 40.2 1031.8)" fill="#fff"/><rect x="36.6" y="1015.5999999999999" width="7.2" height="8" rx="1" transform="rotate(315 40.2 1031.8)" fill="#fff"/><circle cx="40.2" cy="1031.8" r="11" fill="#fff"/><circle cx="40.2" cy="1031.8" r="5" fill="#1a354a"/></svg>
<svg class="a" style="left:0px;top:0px;overflow:visible" width="80" height="1558" viewBox="0 0 80 1558"><path d="M31 1544 L38.8 1559 M39.8 1544 L47.6 1559" stroke="#eee" stroke-width="2.3" stroke-linecap="round"/></svg>
<div class="a" style="left:2138px;top:14px;width:528px;height:48px;background:#fff"></div>
<div class="a" style="left:2138px;top:14px;width:74px;height:48px;background:#e6e6e6"></div>
<div class="t" style="left:2150px;top:27.65px;font-size:22.5px;font-weight:normal;font-style:normal;color:#000;">All</div>
<svg class="a" style="left:2187px;top:31px" width="20" height="14" viewBox="0 0 20 14"><path d="M2 3 L10 11 L18 3" fill="none" stroke="#000" stroke-width="2.2"/></svg>
<div class="t" style="left:2228px;top:27.65px;font-size:22.5px;font-weight:normal;font-style:normal;color:#777;">Global Search</div>
<div class="t" style="left:2816px;top:27.58px;font-size:22px;font-weight:normal;font-style:normal;color:#fff;">Cassie Pataro</div>
<svg class="a" style="left:2962px;top:32px" width="28" height="13" viewBox="0 0 28 13"><path d="M2 3 L14 10 L26 3" fill="none" stroke="#fff" stroke-width="1.8"/></svg>
<div class="a" style="left:2093px;top:8px;width:43px;height:37px;border-radius:50%;background:#a42b2b"></div>
<div class="t" style="left:2099.5px;top:18.11px;font-size:17px;font-weight:bold;font-style:normal;color:#fff;letter-spacing:-0.3px;">99+</div>
<svg class="a" style="left:0px;top:0px;overflow:visible" width="340" height="77" viewBox="0 0 340 77">
<path fill="#fff" fill-rule="evenodd" d="M110.8 18.9 L117.8 18.9 L132.1 55.9 L125 55.9 L121.8 47.2 L106.3 47.2 L102.7 55.9 L96 55.9 Z M114.4 26.4 L108.3 41.6 L119.8 41.6 Z"/>
<circle cx="149.5" cy="43" r="11.2" fill="none" stroke="#fff" stroke-width="6"/>
<rect x="157.6" y="16.7" width="6.6" height="39.2" fill="#fff"/>
<ellipse cx="207.8" cy="37.4" rx="42.5" ry="9" transform="rotate(-35.5 207.8 37.4)" fill="none" stroke="#fff" stroke-width="2.2"/>
<path d="M230 24.5 L239.5 23.6 L240 32 L230 32 Z" fill="#1a354a"/>
<circle cx="207.6" cy="38" r="25.4" fill="none" stroke="#fff" stroke-width="5.8"/>
<path fill="#fff" d="M229 34 C226 34 221 35.5 217.8 39.2 L216.6 41.9 L220.1 45.3 L222.8 44.2 C226.5 40.8 228.6 37 229 34 Z"/>
<path fill="#fff" d="M218.8 36.6 L213.2 38.9 L216.3 41 Z M224.4 43.5 L221 48.7 L220.2 45 Z"/>
<circle cx="224.3" cy="37.7" r="1.35" fill="#1a354a"/>
<rect x="241" y="30.3" width="6.9" height="25.5" fill="#fff"/>
<path d="M244.5 45 C244.5 36 249 33 258.4 32.9" fill="none" stroke="#fff" stroke-width="5.6"/>
<rect x="262.5" y="16.5" width="6.7" height="39.3" fill="#fff"/>
<circle cx="277.6" cy="43" r="11.3" fill="none" stroke="#fff" stroke-width="6.2"/>
<rect x="298.2" y="30.3" width="6.9" height="25.5" fill="#fff"/>
<circle cx="301.7" cy="22.2" r="4.1" fill="#fff"/>
<path d="M316.75 23 V47 C316.75 52 320 53 328 53.2" fill="none" stroke="#fff" stroke-width="6.9"/>
<rect x="310" y="30.3" width="16.6" height="5.4" fill="#fff"/>
</svg>
<svg class="a" style="left:0px;top:0px;overflow:visible" width="80" height="77" viewBox="0 0 80 77"><path d="M19.8 51 Q15 56 12.1 64.9" fill="none" stroke="#e0607a" stroke-width="1.5" stroke-linecap="round" opacity="0.9"/><path d="M26.4 27 Q20 26 14.7 28.6" fill="none" stroke="#c2407e" stroke-width="1.5" stroke-linecap="round" opacity="0.9"/><path d="M24.9 31.1 Q18 32 13.1 36.8" fill="none" stroke="#b8326e" stroke-width="1.5" stroke-linecap="round" opacity="0.9"/><path d="M23.9 33.7 Q18 35 14.7 39.8" fill="none" stroke="#c23a75" stroke-width="1.5" stroke-linecap="round" opacity="0.9"/><path d="M25.5 29 Q19 29.5 13.5 32.5" fill="none" stroke="#9b3c8c" stroke-width="1.5" stroke-linecap="round" opacity="0.9"/><path d="M31 19.4 Q27 14 24.9 9.9" fill="none" stroke="#d98ab5" stroke-width="1.5" stroke-linecap="round" opacity="0.9"/><path d="M29.5 20.5 Q24 16 19.8 15" fill="none" stroke="#a8336a" stroke-width="1.5" stroke-linecap="round" opacity="0.9"/><path d="M30 19.5 Q25 14 21.3 12.2" fill="none" stroke="#c9609a" stroke-width="1.5" stroke-linecap="round" opacity="0.9"/><path d="M27 24 Q21 21 17.5 19.5" fill="none" stroke="#8e3a88" stroke-width="1.5" stroke-linecap="round" opacity="0.9"/><path d="M34.1 19.4 Q35 14 36.7 11.2" fill="none" stroke="#c2357e" stroke-width="1.5" stroke-linecap="round" opacity="0.9"/><path d="M38.7 18.8 Q41 14.5 44.8 12.2" fill="none" stroke="#b03060" stroke-width="1.5" stroke-linecap="round" opacity="0.9"/><path d="M36.5 19 Q38 14 40.5 10.5" fill="none" stroke="#9a4a9a" stroke-width="1.5" stroke-linecap="round" opacity="0.9"/><path d="M51 17.8 Q57 14.5 63.3 13.7" fill="none" stroke="#3fb3b0" stroke-width="1.5" stroke-linecap="round" opacity="0.9"/><path d="M50 18.5 Q54 12 57.6 8.4" fill="none" stroke="#6a6fb0" stroke-width="1.5" stroke-linecap="round" opacity="0.9"/><path d="M48 19 Q52 14 55 11" fill="none" stroke="#5fa8c8" stroke-width="1.5" stroke-linecap="round" opacity="0.9"/><path d="M54 20.4 Q61 20.5 66.9 22.4" fill="none" stroke="#5ab3d9" stroke-width="1.5" stroke-linecap="round" opacity="0.9"/><path d="M55 22.9 Q60 24 64.8 27.5" fill="none" stroke="#3fb3b0" stroke-width="1.5" stroke-linecap="round" opacity="0.9"/><path d="M55.5 27 Q59 30 61.5 35" fill="none" stroke="#4a8a70" stroke-width="1.5" stroke-linecap="round" opacity="0.9"/><path d="M57.6 42.9 Q63 39 66.9 34.7" fill="none" stroke="#e6e04a" stroke-width="1.5" stroke-linecap="round" opacity="0.9"/><path d="M59.2 46.5 Q64 46.5 68.9 48.5" fill="none" stroke="#d8e0a0" stroke-width="1.5" stroke-linecap="round" opacity="0.9"/><path d="M59.2 48.5 Q65 51 68.9 56.7" fill="none" stroke="#c8d890" stroke-width="1.5" stroke-linecap="round" opacity="0.9"/><path d="M59.7 51.6 Q64 57 66.3 64.9" fill="none" stroke="#5aa88a" stroke-width="1.5" stroke-linecap="round" opacity="0.9"/><path d="M58.5 40 Q61 36 63.5 33" fill="none" stroke="#6fc07a" stroke-width="1.5" stroke-linecap="round" opacity="0.9"/><path d="M21.8 42.9 Q16 43.5 12.1 46.5" fill="none" stroke="#b8d070" stroke-width="1.5" stroke-linecap="round" opacity="0.9"/><path d="M22.8 41.4 Q18 41 14.1 41.4" fill="none" stroke="#3fb3b0" stroke-width="1.5" stroke-linecap="round" opacity="0.9"/>
<path fill="#4eaae8" d="M30 20.4 L50 20.4 Q52 20.4 52.5 22.5 L62 63 Q62.4 65.4 60 65.4 L52.5 65.4 Q48.5 65.4 46 61.5 L42.5 58.5 Q39.5 56.5 36.5 58.5 L33 61.5 Q30.5 65.4 26.5 65.4 L19 65.4 Q16.6 65.4 17 63 L27.5 22.5 Q28 20.4 30 20.4 Z"/>
<path fill="#fff" d="M39.5 27.8 C44 32 47 39 46.9 46 C46.8 50 45.5 53 44.8 55.2 L34.2 55.2 C33.5 53 32.2 50 32.1 46 C32 39 35 32 39.5 27.8 Z"/>
<circle cx="39.5" cy="37.3" r="2.6" fill="#4eaae8"/>
<path fill="#fff" d="M30.5 47 L33.5 52.5 L32.8 54.5 L28 56.7 Z M48.5 47 L45.5 52.5 L46.2 54.5 L51 56.7 Z"/>
</svg>
<svg class="a" style="left:1875.5px;top:15.8px;overflow:visible" width="45" height="45" viewBox="0 0 45 45"><path d="M22.5 11 V34 M11 22.5 H34" stroke="#1a354a" stroke-width="6.8" stroke-linecap="round"/></svg>
<svg class="a" style="left:1935.9px;top:15.8px;overflow:visible" width="45" height="45" viewBox="0 0 45 45"><g transform="translate(23.2 21.8) rotate(-45)" fill="none" stroke="#1a354a" stroke-width="3.6" stroke-linecap="round">
<path d="M6.2 -4.2 H11.6 A4.2 4.2 0 0 1 11.6 4.2 H1.8 A4.2 4.2 0 0 1 -2.4 0"/><path d="M-6.2 4.2 H-11.6 A4.2 4.2 0 0 1 -11.6 -4.2 H-1.8 A4.2 4.2 0 0 1 2.4 0"/></g></svg>
<svg class="a" style="left:1997px;top:15.8px;overflow:visible" width="45" height="45" viewBox="0 0 45 45"><path d="M13 25.4 A11.5 11.5 0 1 0 13.55 16.28" fill="none" stroke="#1a354a" stroke-width="2.4"/>
<path d="M8.6 17.2 L16.4 18.7 L10.9 21.6 Z" fill="#1a354a"/>
<path d="M23.5 12.7 V22.2 L29.8 27.4" fill="none" stroke="#1a354a" stroke-width="2.4"/></svg>
<svg class="a" style="left:2057.5px;top:15.8px;overflow:visible" width="45" height="45" viewBox="0 0 45 45"><path fill="#1a354a" d="M22.5 7.1 C26.8 7.1 29.4 10.5 29.6 15 L29.9 21.5 C30.3 25.5 32.5 27.8 35.3 29.8 L35.3 31.6 L10.5 31.6 L10.5 29.8 C13.3 27.8 15.3 25.5 15.6 21.5 L15.9 15 C16.1 10.5 18.2 7.1 22.5 7.1 Z M19.2 33.2 H26.2 Q26 36.5 22.7 36.5 Q19.4 36.5 19.2 33.2 Z"/></svg>
<svg class="a" style="left:2695px;top:15.8px;overflow:visible" width="45" height="45" viewBox="0 0 45 45"><path d="M15.6 14.5 C16.2 10.2 19 8.4 22.7 8.4 C27 8.4 29.7 11 29.7 14.6 C29.7 17.8 27.8 19.6 25.6 21.4 C23.6 23 22.8 24.3 22.8 26.3 L22.8 27.7" fill="none" stroke="#1a354a" stroke-width="3.3"/>
<rect x="20.5" y="31" width="4.3" height="5.1" fill="#1a354a"/></svg>
<svg class="a" style="left:2755.5px;top:15.8px;overflow:visible" width="45" height="45" viewBox="0 0 45 45"><path fill="#1a354a" d="M22.5 7.3 C26.8 7.3 28.6 10.5 28.6 14.8 C28.6 16.5 28.8 17 29 17.8 C28.6 20.5 27 25.5 22.5 25.5 C18 25.5 16.4 20.5 16 17.8 C16.2 17 16.4 16.5 16.4 14.8 C16.4 10.5 18.2 7.3 22.5 7.3 Z"/>
<path fill="#1a354a" d="M17.5 24.5 Q22.5 29 27.5 24.5 Q34.5 26.5 36.5 31 Q37.2 33 36.5 35 Q22.5 37.8 8.5 35 Q7.8 33 8.5 31 Q10.5 26.5 17.5 24.5 Z"/></svg>
<svg class="a" style="left:1815px;top:15.8px;overflow:visible" width="45" height="45" viewBox="0 0 45 45"><defs><linearGradient id="pg" x1="0" y1="0" x2="1" y2="1"><stop offset="0" stop-color="#f7d64a"/><stop offset="0.55" stop-color="#e9a93a"/><stop offset="1" stop-color="#b8651e"/></linearGradient></defs>
<path d="M8 35.7 L15.8 15.4 L27.5 27.5 Z" fill="url(#pg)" stroke="#a55a1a" stroke-width="0.9" stroke-linejoin="round"/>
<path d="M15.8 15.4 L19 19 L27.5 27.5 L21.5 24 Z" fill="#c98a2e" opacity="0.6"/>
<path d="M9.5 7.5 Q7 9 9 11 Q11.5 13 9.5 15 Q8 17 11 18" fill="none" stroke="#3f6fd8" stroke-width="1.3" stroke-linecap="round"/>
<path d="M16.5 12 Q17 8.5 19.5 9.5 Q21.5 11 20.5 17" fill="none" stroke="#d9457a" stroke-width="1.4" stroke-linecap="round"/>
<path d="M28.5 17.5 Q28 13.5 31 13 Q33 13 31.5 11 Q34 9 36 11" fill="none" stroke="#c9406a" stroke-width="1.4" stroke-linecap="round"/>
<path d="M21.5 24.8 Q27 21.5 34.9 21.6" fill="none" stroke="#3f7fe0" stroke-width="1.5" stroke-linecap="round"/>
<circle cx="13.2" cy="9.5" r="0.9" fill="#e8c040"/><circle cx="21.5" cy="8.3" r="1" fill="#3f6fd8"/><circle cx="23.5" cy="13" r="1" fill="#3f6fd8"/>
<circle cx="8.5" cy="22.5" r="1" fill="#e04a7a"/><circle cx="12.5" cy="25.5" r="1" fill="#3f6fd8"/><circle cx="31" cy="26.7" r="1" fill="#e8c040"/><circle cx="36" cy="24.2" r="1" fill="#e07030"/>
<circle cx="27.5" cy="31.3" r="1" fill="#3f6fd8"/><circle cx="32.5" cy="29.8" r="1" fill="#e07030"/><circle cx="34.5" cy="33.8" r="1" fill="#e04a7a"/><circle cx="31" cy="8.3" r="0.9" fill="#e04a7a"/></svg>
<svg class="a" style="left:2590px;top:22px;overflow:visible" width="34" height="32" viewBox="0 0 34 32"><circle cx="13.7" cy="14.1" r="8.4" fill="none" stroke="#1a354a" stroke-width="2.8"/><path d="M19.8 20.2 L28 27.9" stroke="#1a354a" stroke-width="3" stroke-linecap="round"/></svg>
<svg class="a" style="left:2634px;top:22px;overflow:visible" width="24" height="32" viewBox="0 0 24 32"><rect x="6.6" y="3" width="10.2" height="16.3" rx="5.1" fill="#1a354a"/><path d="M3.7 13.5 V15 C3.7 19.5 7.3 23.2 11.7 23.2 C16.1 23.2 19.7 19.5 19.7 15 V13.5" fill="none" stroke="#1a354a" stroke-width="2.5" stroke-linecap="round"/><path d="M11.7 23 V27.5 M7.7 28.3 H15.7" stroke="#1a354a" stroke-width="2.6" stroke-linecap="round"/></svg>
</body></html>
